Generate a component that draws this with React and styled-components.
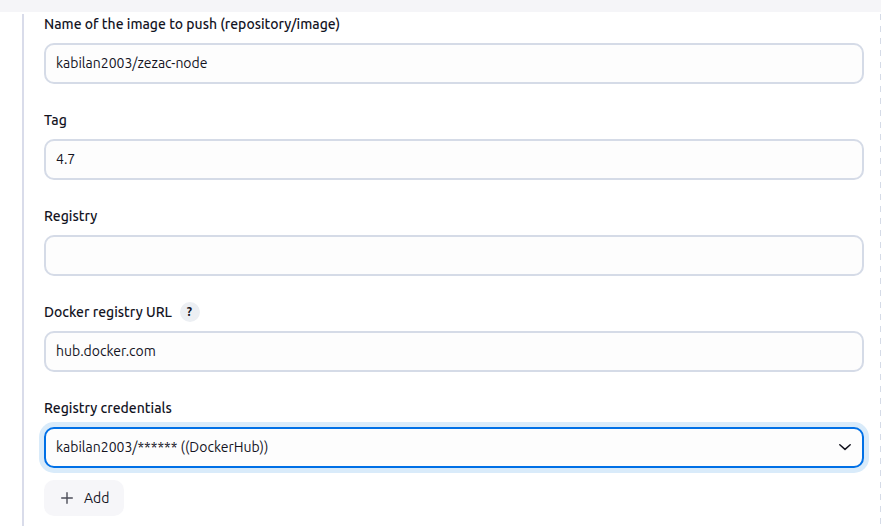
import React from 'react';
import styled, { createGlobalStyle } from 'styled-components';

const GlobalStyle = createGlobalStyle`
  * { box-sizing: border-box; }
  body {
    margin: 0;
    background: #fff;
    color: #14141f;
    font-family: Ubuntu, "Noto Sans", sans-serif;
    font-size: 14px;
    overflow: hidden;
  }
`;

const Page = styled.div`
  height: 526px;
  display: flex;
  flex-direction: column;
`;

const TopStrip = styled.div`
  flex: none;
  height: 12px;
  background: #f5f5f8;
`;

const Content = styled.main`
  flex: 1;
  display: flex;
  min-height: 0;
  padding: 2px 0 0 22px;
`;

const Section = styled.section`
  flex: 1;
  border-left: 2px solid #d9dcea;
  padding: 0 16px 0 20px;
`;

const DashedEdge = styled.div`
  width: 1px;
  background: repeating-linear-gradient(to bottom, #d5dbe7 0 6px, transparent 6px 12px);
`;

const Field = styled.div`
  height: 96px;
`;

const LabelRow = styled.div`
  display: flex;
  align-items: center;
  gap: 8px;
  height: 20px;
  margin-bottom: 9px;
`;

const Label = styled.label`
  font-size: 14px;
  font-weight: 500;
  line-height: 20px;
  white-space: nowrap;
`;

const Help = styled.button`
  width: 20px;
  height: 20px;
  padding: 0 1px 0 0;
  border: 0;
  border-radius: 50%;
  background: #eceff3;
  color: #14141f;
  font: 700 12px/20px Ubuntu, "Noto Sans", sans-serif;
`;

const Control = styled.div`
  display: flex;
  align-items: center;
  height: 41px;
  padding: 0 10px;
  border: 2px solid ${(p) => (p.$focused ? '#0070e6' : '#d5dbe7')};
  border-radius: 10px;
  background: #fdfdfd;
  box-shadow: ${(p) => (p.$focused ? '0 0 0 5px #d9ebfa' : 'none')};
`;

const Value = styled.span`
  flex: 1;
  line-height: 20px;
  padding-bottom: 1px;
  white-space: nowrap;
`;

const Chevron = styled.svg`
  width: 14px;
  height: 8px;
  margin-bottom: 1px;
`;

const AddButton = styled.button`
  display: flex;
  align-items: center;
  gap: 11px;
  width: 80px;
  height: 36px;
  margin-top: -14px;
  padding: 0 0 0 17px;
  border: 0;
  border-radius: 10px;
  background: #f6f6f9;
  color: #14141f;
  font: 400 14px/20px Ubuntu, "Noto Sans", sans-serif;
`;

const fields = [
  { label: 'Name of the image to push (repository/image)', value: 'kabilan2003/zezac-node' },
  { label: 'Tag', value: '4.7' },
  { label: 'Registry', value: '' },
  { label: 'Docker registry URL', value: 'hub.docker.com', help: true },
  { label: 'Registry credentials', value: 'kabilan2003/****** ((DockerHub))', select: true },
];

export default function App() {
  return (
    <Page>
      <GlobalStyle />
      <TopStrip />
      <Content>
        <Section>
          {fields.map((f) => (
            <Field key={f.label}>
              <LabelRow>
                <Label>{f.label}</Label>
                {f.help && <Help>?</Help>}
              </LabelRow>
              <Control $focused={f.select}>
                <Value>{f.value}</Value>
                {f.select && (
                  <Chevron viewBox="0 0 14 8" fill="none" stroke="#14141f" strokeWidth="1.5" strokeLinecap="round" strokeLinejoin="round">
                    <path d="M1.8 1.7 L7 6.4 L12.2 1.7" />
                  </Chevron>
                )}
              </Control>
            </Field>
          ))}
          <AddButton>
            <svg width="12" height="12" viewBox="0 0 12 12" stroke="#4c4d59" strokeWidth="1.4" strokeLinecap="round">
              <path d="M6 .7 V11.3 M.7 6 H11.3" />
            </svg>
            Add
          </AddButton>
        </Section>
        <DashedEdge />
      </Content>
    </Page>
  );
}
